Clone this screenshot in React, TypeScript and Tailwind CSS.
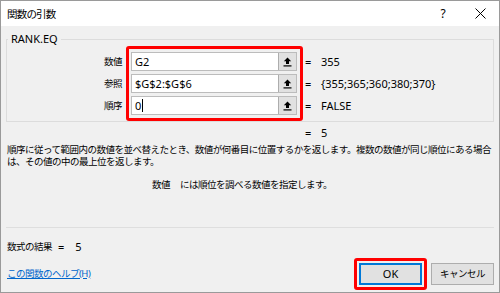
import React from 'react';

const UI_FONT = '"Noto Sans", "Noto Sans CJK JP", sans-serif';

// RefEdit collapse button glyph: arrow pointing up with a base bar
const CollapseIcon = () => (
  <svg width="9" height="10" viewBox="0 0 9 10" aria-hidden="true">
    <path d="M4.5 0.5 L0.8 4.3 H3 V7 H6 V4.3 H8.2 Z" fill="#000" />
    <rect x="0.5" y="8.3" width="8" height="1.2" fill="#000" />
  </svg>
);

const CloseIcon = () => (
  <svg width="11" height="11" viewBox="0 0 11 11" aria-hidden="true">
    <path d="M0.5 0.5 L10.5 10.5 M10.5 0.5 L0.5 10.5" stroke="#000" strokeWidth="1" />
  </svg>
);

interface Arg {
  label: string;
  value: string;
  result: string;
  caret?: boolean;
}

const args: Arg[] = [
  { label: '数値', value: 'G2', result: '355' },
  { label: '参照', value: '$G$2:$G$6', result: '{355;365;360;380;370}' },
  { label: '順序', value: '0', result: 'FALSE', caret: true },
];

const RefInput: React.FC<{ arg: Arg }> = ({ arg }) => (
  <div className="flex h-[19px] border border-[#bcbcbc] bg-white">
    <div className="flex flex-1 items-center pl-[3px] text-[11px] leading-[17px] text-black">
      {arg.value}
      {arg.caret && <span className="ml-[1px] inline-block h-[13px] w-px bg-black" />}
    </div>
    <div className="flex w-[18px] items-center justify-center border-l border-[#adadad] bg-[#e1e1e1]">
      <CollapseIcon />
    </div>
  </div>
);

export default function App() {
  return (
    <div
      className="flex h-[293px] w-[500px] flex-col overflow-hidden border border-[#9a9a9a] bg-[#f0f0f0] text-black"
      style={{ fontFamily: UI_FONT }}
    >
      {/* Title bar */}
      <div className="flex h-[25px] shrink-0 items-center bg-white pl-[6px] pr-[9px]">
        <span className="text-[10.5px] leading-[14px] tracking-[-0.8px]">関数の引数</span>
        <div className="ml-auto flex items-center gap-[17px]">
          <span className="flex w-[20px] justify-center text-[12px] leading-[14px]">?</span>
          <span className="flex w-[20px] justify-center">
            <CloseIcon />
          </span>
        </div>
      </div>

      <div className="flex flex-1 flex-col px-[5px]">
        {/* Arguments group */}
        <fieldset className="mt-[6px] border border-[#dcdcdc]">
          <legend className="ml-[1px] px-[3px] text-[11px] leading-[14px]">RANK.EQ</legend>
          <div className="flex">
            <div className="flex w-[119px] flex-col gap-[3px] pt-[6px]">
              {args.map(a => (
                <div
                  key={a.label}
                  className="flex h-[19px] items-center justify-end pr-[4px] text-[9.5px] leading-[12px] tracking-[-0.5px]"
                >
                  {a.label}
                </div>
              ))}
            </div>
            <div className="flex w-[177px] flex-col gap-[3px] rounded-[3px] border-[3px] border-[#ff0000] pb-[3px] pl-[2px] pr-[3px] pt-[3px]">
              {args.map(a => (
                <RefInput key={a.label} arg={a} />
              ))}
            </div>
            <div className="flex flex-col gap-[3px] pl-[2px] pt-[6px]">
              {args.map(a => (
                <div key={a.label} className="flex h-[19px] items-center text-[11px] leading-[14px]">
                  <span className="w-[16px]">=</span>
                  <span>{a.result}</span>
                </div>
              ))}
            </div>
          </div>
        </fieldset>

        {/* Function result */}
        <div className="mt-[5px] flex pl-[299px] text-[11px] leading-[12px]">
          <span className="w-[16px]">=</span>
          <span>5</span>
        </div>

        <p className="mt-[5px] pl-[1px] text-[9.5px] leading-[12px] tracking-[-0.5px]">
          順序に従って範囲内の数値を並べ替えたとき、数値が何番目に位置するかを返します。複数の数値が同じ順位にある場合
          <br />
          は、その値の中の最上位を返します。
        </p>

        <div className="mt-[11px] flex pl-[146px] text-[9.5px] leading-[12px] tracking-[-0.5px]">
          <span className="w-[28px]">数値</span>
          <span>には順位を調べる数値を指定します。</span>
        </div>

        <div className="mt-[36px] h-px bg-[#dedede]" />

        {/* Footer */}
        <div className="flex justify-between">
          <div className="flex flex-col pl-[1px]">
            <div className="mt-[13px] flex items-center text-[9.5px] leading-[12px]">
              <span className="tracking-[-0.5px]">数式の結果</span>
              <span className="ml-[6px] text-[11px]">=</span>
              <span className="ml-[11px] text-[11px]">5</span>
            </div>
            <a className="mt-[15px] text-[9.5px] leading-[12px] tracking-[-0.5px] text-[#0066cc] underline">
              この関数のヘルプ(H)
            </a>
          </div>
          <div className="mt-[30px] flex items-start gap-[4px]">
            <div className="rounded-[3px] border-[3px] border-[#ff0000] p-[2px]">
              <button className="flex h-[22px] w-[63px] items-center justify-center border-2 border-[#0078d7] bg-[#e1e1e1] text-[11px] leading-[14px]">
                OK
              </button>
            </div>
            <button className="mt-[5px] flex h-[22px] w-[63px] items-center justify-center border border-[#adadad] bg-[#e1e1e1] text-[9.5px] leading-[12px] tracking-[-0.5px]">
              キャンセル
            </button>
          </div>
        </div>
      </div>
    </div>
  );
}
